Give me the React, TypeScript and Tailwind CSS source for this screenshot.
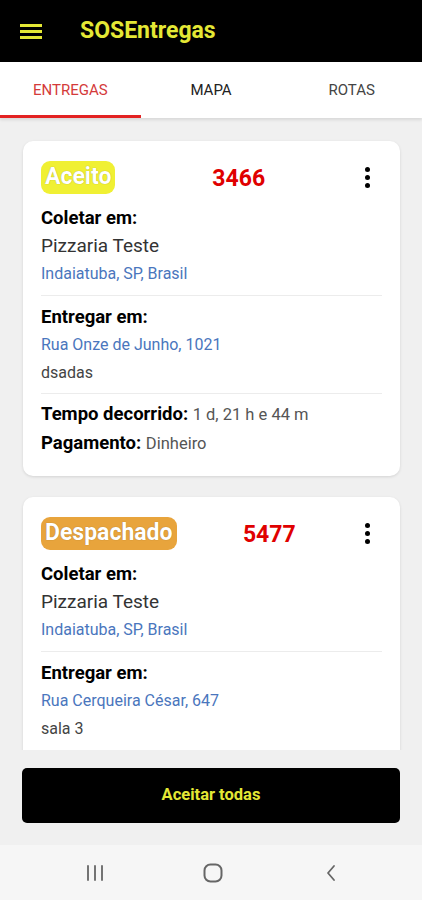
import React from "react";

const font = { fontFamily: "Roboto, 'Noto Sans', sans-serif" };

function Kebab() {
  return (
    <div className="flex flex-col items-center gap-[3px] w-[10px] mr-[10px]">
      <span className="block w-[5px] h-[5px] rounded-full bg-black" />
      <span className="block w-[5px] h-[5px] rounded-full bg-black" />
      <span className="block w-[5px] h-[5px] rounded-full bg-black" />
    </div>
  );
}

function Divider() {
  return <div className="h-px bg-[#ececec] my-[7px]" />;
}

type CardProps = {
  status: string;
  badgeClass: string;
  num: string;
  pickupName: string;
  pickupAddr: string;
  dropAddr: string;
  dropNote: string;
  tempo?: string;
  pagamento?: string;
};

function Card(p: CardProps) {
  return (
    <div className="bg-white rounded-[10px] shadow-[0_1px_3px_rgba(0,0,0,0.12)] px-[18px] pt-[20px] pb-[18px]">
      <div className="flex items-center justify-between h-[33px]">
        <span
          className={`h-[33px] flex items-center px-[4px] rounded-[9px] text-white font-bold text-[23px] ${p.badgeClass}`}
          style={{ textShadow: "0 0 1px rgba(0,0,0,0.35)" }}
        >
          {p.status}
        </span>
        <span className="text-[#e00000] font-bold text-[23px] mt-[3px]">{p.num}</span>
        <Kebab />
      </div>
      <div className="mt-[10px]">
        <div className="text-black font-bold text-[18.5px] leading-[28px]">Coletar em:</div>
        <div className="text-[#333] text-[19px] leading-[28px]">{p.pickupName}</div>
        <div className="text-[#4a76bd] text-[16px] leading-[28px]">{p.pickupAddr}</div>
      </div>
      <Divider />
      <div>
        <div className="text-black font-bold text-[18.5px] leading-[28px]">Entregar em:</div>
        <div className="text-[#4a76bd] text-[16px] leading-[28px]">{p.dropAddr}</div>
        <div className="text-[#444] text-[16px] leading-[28px]">{p.dropNote}</div>
      </div>
      {p.tempo && (
        <>
          <div className="h-px bg-[#ececec] mt-[6px] mb-[6px]" />
          <div className="text-[18.5px] leading-[28px]">
            <span className="font-bold text-black">Tempo decorrido: </span>
            <span className="text-[#555] text-[16.5px]">{p.tempo}</span>
          </div>
          <div className="text-[18.5px] leading-[29px]">
            <span className="font-bold text-black">Pagamento: </span>
            <span className="text-[#555] text-[16.5px]">{p.pagamento}</span>
          </div>
        </>
      )}
    </div>
  );
}

export default function App() {
  return (
    <div className="w-[422px] h-[900px] flex flex-col bg-[#f0f0f0] overflow-hidden" style={font}>
      {/* Header */}
      <div className="h-[62px] bg-black flex items-center shrink-0">
        <div className="ml-[20px] flex flex-col gap-[3px] w-[22px]">
          <span className="block h-[3px] bg-[#e4e835]" />
          <span className="block h-[3px] bg-[#e4e835]" />
          <span className="block h-[3px] bg-[#e4e835]" />
        </div>
        <span className="ml-[38px] text-[#e4e835] font-bold text-[23px]">SOSEntregas</span>
      </div>
      {/* Tabs */}
      <div className="h-[56px] bg-white flex shrink-0 relative z-10 shadow-[0_2px_3px_rgba(0,0,0,0.10)]">
        <div className="flex-1 flex items-center justify-center relative">
          <span className="text-[#d43a3a] text-[15px]">ENTREGAS</span>
          <span className="absolute left-0 right-0 bottom-0 h-[3px] bg-[#e32222]" />
        </div>
        <div className="flex-1 flex items-center justify-center">
          <span className="text-[#222] text-[15px]">MAPA</span>
        </div>
        <div className="flex-1 flex items-center justify-center">
          <span className="text-[#444] text-[15px]">ROTAS</span>
        </div>
      </div>
      {/* Content */}
      <div className="h-[632px] overflow-hidden shrink-0 pl-[23px] pr-[22px] pt-[23px] flex flex-col gap-[21px]">
        <Card
          status="Aceito"
          badgeClass="bg-[#f0f033]"
          num="3466"
          pickupName="Pizzaria Teste"
          pickupAddr="Indaiatuba, SP, Brasil"
          dropAddr="Rua Onze de Junho, 1021"
          dropNote="dsadas"
          tempo="1 d, 21 h e 44 m"
          pagamento="Dinheiro"
        />
        <Card
          status="Despachado"
          badgeClass="bg-[#e8a43c]"
          num="5477"
          pickupName="Pizzaria Teste"
          pickupAddr="Indaiatuba, SP, Brasil"
          dropAddr="Rua Cerqueira César, 647"
          dropNote="sala 3"
        />
      </div>
      {/* Bottom button */}
      <div className="h-[95px] shrink-0 px-[22px] pt-[18px]">
        <button className="w-full h-[55px] bg-black rounded-[5px] text-[#e4e835] font-bold text-[16.5px]">
          Aceitar todas
        </button>
      </div>
      {/* Nav bar */}
      <div className="flex-1 bg-[#f6f6f6] flex items-center pl-[36px]">
        <div className="w-[118px] flex justify-center">
          <svg width="20" height="18" viewBox="0 0 20 18">
            <g stroke="#666" strokeWidth="1.8" strokeLinecap="round">
              <line x1="3" y1="2" x2="3" y2="16" />
              <line x1="10" y1="2" x2="10" y2="16" />
              <line x1="17" y1="2" x2="17" y2="16" />
            </g>
          </svg>
        </div>
        <div className="w-[118px] flex justify-center">
          <svg width="20" height="20" viewBox="0 0 20 20">
            <rect x="1.5" y="1.5" width="17" height="17" rx="6" fill="none" stroke="#666" strokeWidth="2" />
          </svg>
        </div>
        <div className="w-[118px] flex justify-center">
          <svg width="12" height="18" viewBox="0 0 12 18">
            <polyline points="9,2 3,9 9,16" fill="none" stroke="#666" strokeWidth="1.8" strokeLinecap="round" strokeLinejoin="round" />
          </svg>
        </div>
      </div>
    </div>
  );
}
